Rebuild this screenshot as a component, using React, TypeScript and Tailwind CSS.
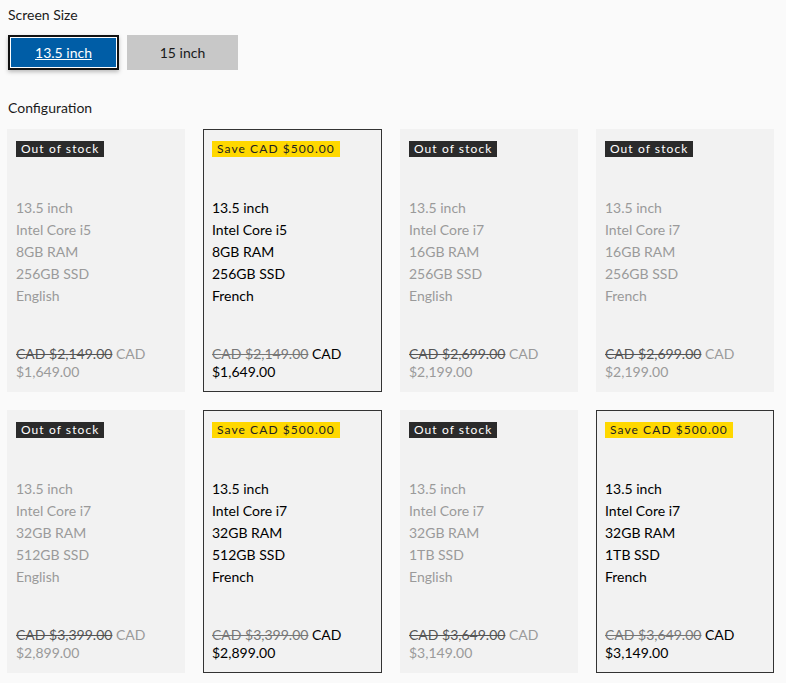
import { useState } from "react"

type Config = {
  size: string
  cpu: string
  ram: string
  ssd: string
  lang: string
  was: string
  now: string
  inStock: boolean
}

const configs: Config[] = [
  { size: "13.5 inch", cpu: "Intel Core i5", ram: "8GB RAM", ssd: "256GB SSD", lang: "English", was: "CAD $2,149.00", now: "$1,649.00", inStock: false },
  { size: "13.5 inch", cpu: "Intel Core i5", ram: "8GB RAM", ssd: "256GB SSD", lang: "French", was: "CAD $2,149.00", now: "$1,649.00", inStock: true },
  { size: "13.5 inch", cpu: "Intel Core i7", ram: "16GB RAM", ssd: "256GB SSD", lang: "English", was: "CAD $2,699.00", now: "$2,199.00", inStock: false },
  { size: "13.5 inch", cpu: "Intel Core i7", ram: "16GB RAM", ssd: "256GB SSD", lang: "French", was: "CAD $2,699.00", now: "$2,199.00", inStock: false },
  { size: "13.5 inch", cpu: "Intel Core i7", ram: "32GB RAM", ssd: "512GB SSD", lang: "English", was: "CAD $3,399.00", now: "$2,899.00", inStock: false },
  { size: "13.5 inch", cpu: "Intel Core i7", ram: "32GB RAM", ssd: "512GB SSD", lang: "French", was: "CAD $3,399.00", now: "$2,899.00", inStock: true },
  { size: "13.5 inch", cpu: "Intel Core i7", ram: "32GB RAM", ssd: "1TB SSD", lang: "English", was: "CAD $3,649.00", now: "$3,149.00", inStock: false },
  { size: "13.5 inch", cpu: "Intel Core i7", ram: "32GB RAM", ssd: "1TB SSD", lang: "French", was: "CAD $3,649.00", now: "$3,149.00", inStock: true },
]

function ConfigCard({ c }: { c: Config }) {
  return (
    <div
      className={
        "h-[263px] bg-[#f2f2f2] px-[8px] pt-[11px] pb-[10px] flex flex-col " +
        (c.inStock ? "border border-[#333] text-black" : "border border-transparent text-[#9a9a9a]")
      }
    >
      <div className="flex">
        {c.inStock ? (
          <span className="bg-[#ffd800] text-[#222] text-[12px] leading-[16px] px-[5px] tracking-[0.09em]">
            Save CAD $500.00
          </span>
        ) : (
          <span className="bg-[#2b2b2b] text-white text-[12px] leading-[16px] px-[5px] tracking-[0.09em]">
            Out of stock
          </span>
        )}
      </div>
      <div className="mt-[40px] text-[14px] leading-[22px]">
        <div>{c.size}</div>
        <div>{c.cpu}</div>
        <div>{c.ram}</div>
        <div>{c.ssd}</div>
        <div>{c.lang}</div>
      </div>
      <div className="mt-auto text-[14px] leading-[18px]">
        <span className={"line-through " + (c.inStock ? "text-[#777]" : "text-[#555]")}>{c.was}</span> CAD
        <br />
        {c.now}
      </div>
    </div>
  )
}

export default function App() {
  const [size, setSize] = useState("13.5")

  const btn = (key: string, label: string) => (
    <button
      onClick={() => setSize(key)}
      className={
        "w-[111px] h-[35px] text-[14px] " +
        (size === key
          ? "bg-[#005da6] text-white underline border-2 border-[#111] outline outline-1 outline-white -outline-offset-[3px] shadow-[0_2px_4px_rgba(0,0,0,0.25)]"
          : "bg-[#c8c8c8] text-[#1a1a1a]")
      }
    >
      {label}
    </button>
  )

  return (
    <div className="min-h-screen bg-[#fafafa] px-[7px] pt-[6px] font-['Lato','Noto_Sans',sans-serif] text-[#1a1a1a]">
      <h2 className="text-[14px] leading-[18px] ml-[1px]">Screen Size</h2>
      <div className="flex gap-[8px] mt-[11px] ml-[1px]">
        {btn("13.5", "13.5 inch")}
        {btn("15", "15 inch")}
      </div>
      <h2 className="text-[14px] leading-[18px] mt-[29px] ml-[1px]">Configuration</h2>
      <div className="grid grid-cols-[178px_179px_178px_178px] gap-[18px] mt-[12px]">
        {configs.map((c, i) => (
          <ConfigCard key={i} c={c} />
        ))}
      </div>
    </div>
  )
}
